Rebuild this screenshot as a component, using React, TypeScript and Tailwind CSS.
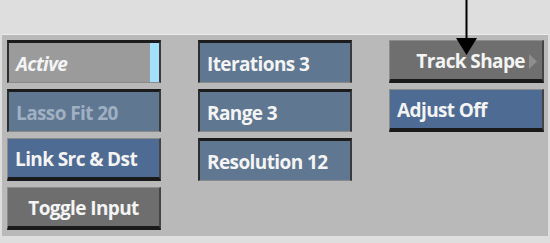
import React from 'react';

type Kind = 'field' | 'button';

function Cell({
    label,
    kind,
    bg,
    text = 'text-[#f4f4f4]',
    align = 'justify-start pl-[7px]',
    italic = false,
    children,
}: {
    label: string;
    kind: Kind;
    bg: string;
    text?: string;
    align?: string;
    italic?: boolean;
    children?: React.ReactNode;
}) {
    // fields look sunken (dark top/left), buttons look raised (dark bottom)
    const edge =
        kind === 'field'
            ? 'border-t-[3px] border-l-[2px] border-r-[2px] border-b border-t-[#1c1c1c] border-l-[#2e2e2e] border-r-[#3a3a3a] border-b-[#8a8a8a]'
            : 'border-b-[4px] border-r-[2px] border-t border-l border-b-[#1a1a1a] border-r-[#444] border-t-[#8c8c8c] border-l-[#8c8c8c]';
    return (
        <div className={`relative flex h-[43px] items-center pt-[3px] ${align} ${bg} ${edge}`}>
            <span
                className={`text-[19px] font-bold tracking-[-0.6px] ${text} ${italic ? 'italic' : ''}`}
                style={{ fontFamily: '"Open Sans", "DejaVu Sans", sans-serif' }}
            >
                {label}
            </span>
            {children}
        </div>
    );
}

export default function App() {
    return (
        <div className="relative h-[243px] w-[550px] overflow-hidden bg-[#dedede] px-[2px] pb-[7px] pt-[34px]">
            <div className="flex h-full gap-[37px] border-t border-t-[#ececec] bg-[#b9b9b9] pl-[5px] pr-[2px] pt-[5px]">
                <div className="flex w-[154px] flex-col gap-[6px]">
                    <Cell label="Active" kind="field" bg="bg-[#9b9b9b]" italic>
                        <div className="absolute right-0 top-0 h-full w-[9px] bg-[#a3e0fb]" />
                    </Cell>
                    <Cell label="Lasso Fit 20" kind="field" bg="bg-[#5f7791]" text="text-[#9fb0c2]" />
                    <Cell label="Link Src & Dst" kind="button" bg="bg-[#4e6b93]" />
                    <Cell label="Toggle Input" kind="button" bg="bg-[#6e6e6e]" align="justify-center" />
                </div>
                <div className="flex w-[154px] flex-col gap-[6px]">
                    <Cell label="Iterations 3" kind="field" bg="bg-[#5f7791]" />
                    <Cell label="Range 3" kind="field" bg="bg-[#5f7791]" />
                    <Cell label="Resolution 12" kind="field" bg="bg-[#5f7791]" />
                </div>
                <div className="flex w-[155px] flex-col gap-[6px]">
                    <Cell label="Track Shape" kind="button" bg="bg-[#6f6f6f]" align="justify-end pr-[17px]">
                        <svg className="absolute right-[5px] top-[13px]" width="8" height="15" viewBox="0 0 8 15">
                            <polygon points="0,0 8,7.5 0,15" fill="#8e8e8e" />
                        </svg>
                    </Cell>
                    <Cell label="Adjust Off" kind="button" bg="bg-[#4e6b93]" />
                </div>
            </div>
            {/* callout arrow */}
            <svg className="absolute left-[454px] top-0" width="26" height="56" viewBox="0 0 26 56">
                <line x1="12.5" y1="0" x2="12.5" y2="44" stroke="#000" strokeWidth="2" />
                <polygon points="2,38 23,38 12.5,55" fill="#000" />
            </svg>
        </div>
    );
}
